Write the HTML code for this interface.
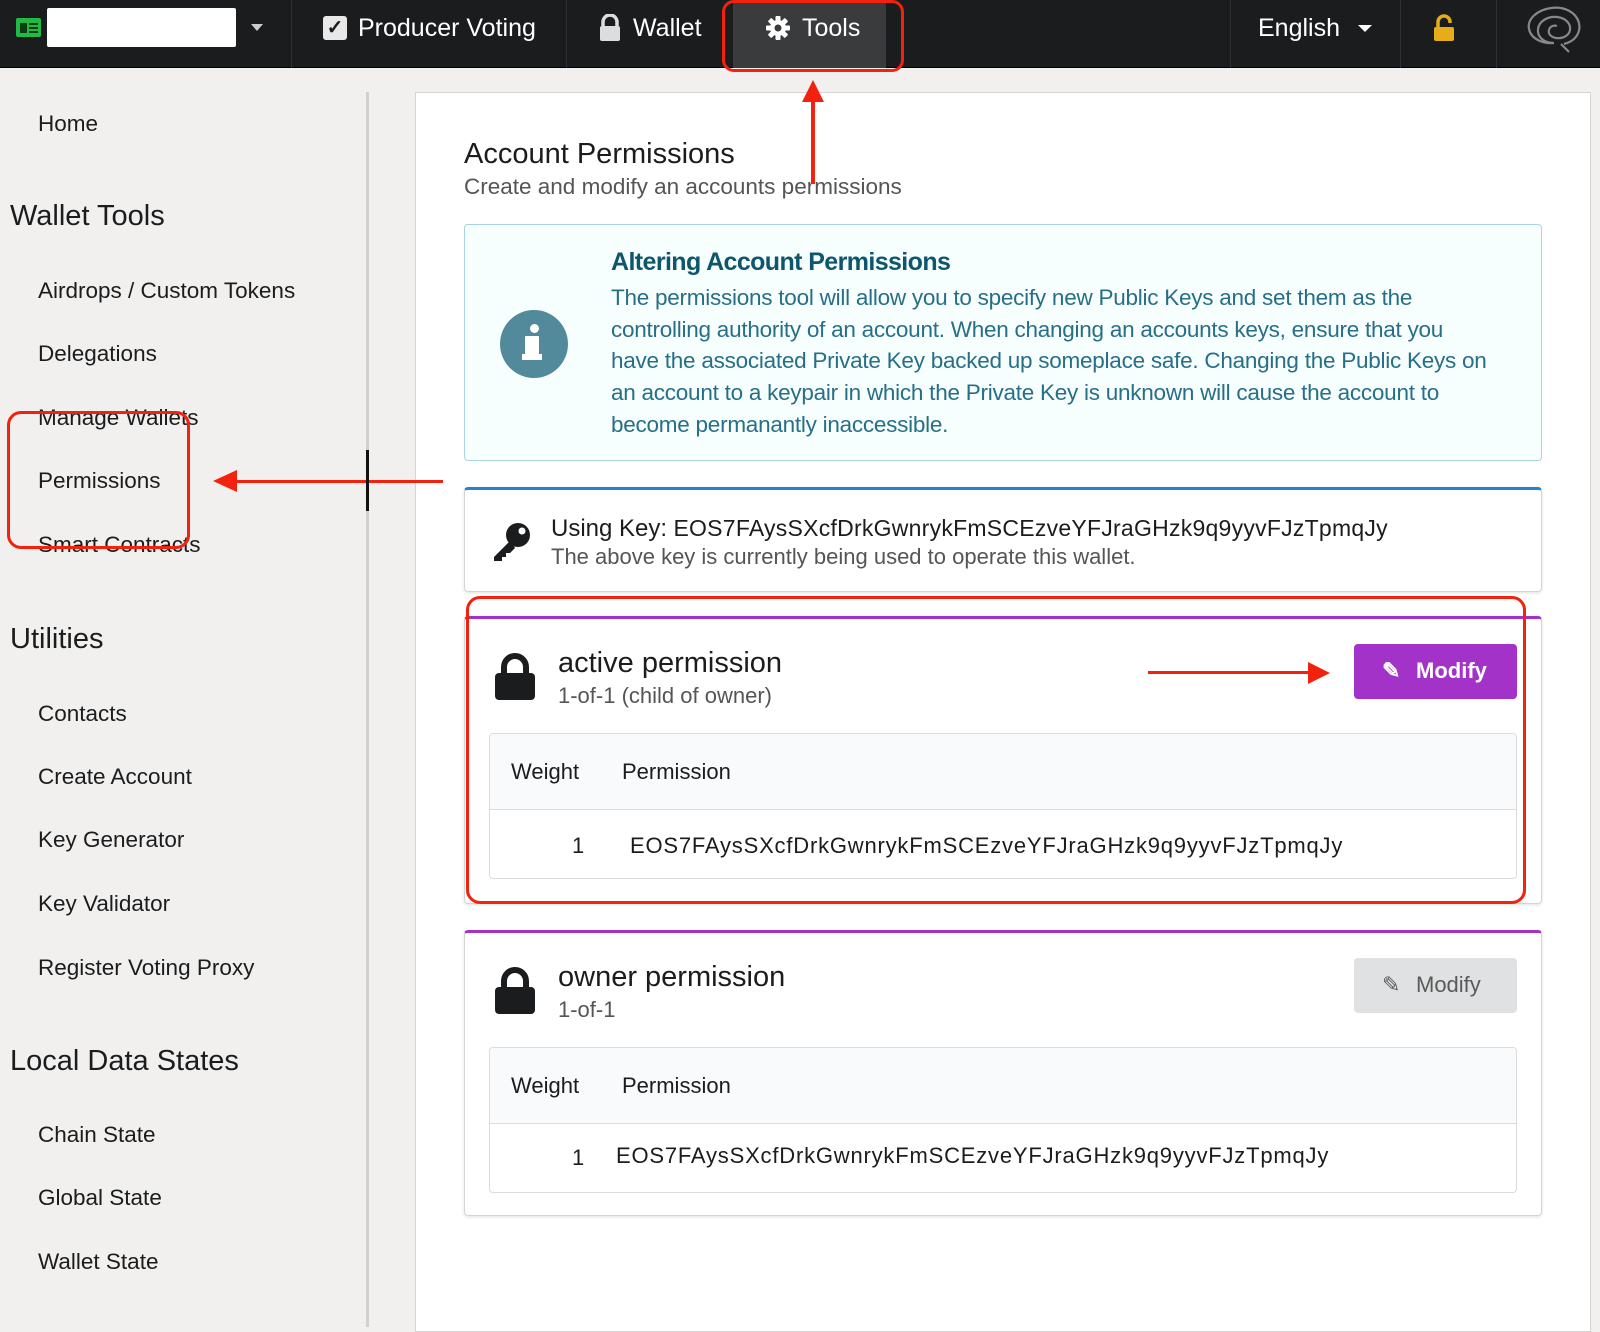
<!DOCTYPE html>
<html><head><meta charset="utf-8"><style>
*{margin:0;padding:0;box-sizing:border-box}
body{width:1600px;height:1327px;overflow:hidden;background:#f1f0ef;font-family:"Liberation Sans",sans-serif;position:relative;color:#1b1c1d}
.a{position:absolute;white-space:nowrap}
.nav{position:absolute;left:0;top:0;width:1600px;height:68px;background:#1b1c1e;border-bottom:1px solid #000}
.nt{color:#fff;font-size:25px;line-height:30px;top:13px}
.vd{position:absolute;top:0;width:1px;height:68px;background:#2f3033}
.si{font-size:22.5px;line-height:26px;left:38px;color:#1b1c1d}
.sh{font-size:29px;line-height:34px;left:10px;color:#1b1c1d}
.card{position:absolute;left:464px;width:1078px;background:#fff;border:1px solid #d4d4d5;border-radius:4px;box-shadow:0 1px 3px rgba(0,0,0,.12)}
.tbl{position:absolute;left:24px;width:1028px;border:1px solid #dcdcdd;border-radius:4px;overflow:hidden;background:#fff}
.th{height:76px;background:#f9fafb;border-bottom:1px solid #dcdcdd;position:relative}
.btn{position:absolute;left:889px;width:163px;height:55px;border-radius:4px;font-size:22px;font-weight:bold}
.k{letter-spacing:0.8px}
</style></head><body>
<div class="nav">
  <div class="a" style="left:16px;top:18px;width:25px;height:19px;background:#21ba45;border-radius:2px"></div>
  <div class="a" style="left:20px;top:23px;width:7px;height:10px;background:#0c3d14"></div>
  <div class="a" style="left:29px;top:23px;width:9px;height:2px;background:#0c3d14;box-shadow:0 4px 0 #0c3d14,0 8px 0 #0c3d14"></div>
  <div class="a" style="left:47px;top:8px;width:189px;height:39px;background:#fff;border-radius:2px"></div>
  <div class="a" style="left:251px;top:24px;border:6px solid transparent;border-top:7px solid #ccc"></div>
  <div class="vd" style="left:291px"></div>
  <div class="a" style="left:323px;top:16px;width:24px;height:24px;background:#e8e8e8;border-radius:3px;color:#1b1c1e;font-size:20px;line-height:24px;text-align:center;font-weight:bold">✓</div>
  <div class="a nt" style="left:358px">Producer Voting</div>
  <div class="vd" style="left:566px"></div>
  <svg class="a" style="left:598px;top:14px" width="24" height="28" viewBox="0 0 24 28"><path d="M5 12V8a7 7 0 0 1 14 0v4" stroke="#ddd" stroke-width="3.5" fill="none"/><rect x="2" y="12" width="20" height="15" rx="2" fill="#ddd"/></svg>
  <div class="a nt" style="left:633px">Wallet</div>
  <div class="a" style="left:733px;top:0;width:153px;height:68px;background:#3a3b3d"></div>
  <svg class="a" style="left:765px;top:15px" width="26" height="26" viewBox="0 0 26 26"><g fill="#fff"><circle cx="13" cy="13" r="8"/><rect x="10.5" y="1" width="5" height="24" rx="1"/><rect x="10.5" y="1" width="5" height="24" rx="1" transform="rotate(45 13 13)"/><rect x="10.5" y="1" width="5" height="24" rx="1" transform="rotate(90 13 13)"/><rect x="10.5" y="1" width="5" height="24" rx="1" transform="rotate(135 13 13)"/></g><circle cx="13" cy="13" r="3.5" fill="#3a3b3d"/></svg>
  <div class="a nt" style="left:802px">Tools</div>
  <div class="vd" style="left:1230px"></div>
  <div class="a nt" style="left:1258px">English</div>
  <div class="a" style="left:1358px;top:25px;border:7px solid transparent;border-top:7px solid #fff"></div>
  <div class="vd" style="left:1400px"></div>
  <svg class="a" style="left:1432px;top:14px" width="24" height="28" viewBox="0 0 24 28"><path d="M6 13V8a6 6 0 0 1 12 0v1" stroke="#e6ac1a" stroke-width="3.5" fill="none"/><rect x="2" y="13" width="20" height="14" rx="2" fill="#e6ac1a"/></svg>
  <div class="vd" style="left:1496px"></div>
  <svg class="a" style="left:1524px;top:4px" width="60" height="50" viewBox="0 0 60 50"><g fill="none" stroke="#888" stroke-width="2.2"><path d="M40 40c12-3 17-12 15-21C52 8 40 2 27 4 13 6 3 15 5 25c2 10 14 15 25 14"/><path d="M30 39c-10 0-17-6-16-14 1-8 10-13 19-12 9 1 14 7 13 13-1 6-8 9-14 8-6-1-8-5-7-8 1-4 5-5 8-4"/><path d="M37 40l8 8"/></g></svg>
</div>
<!-- sidebar -->
<div class="a" style="left:366px;top:92px;width:3px;height:1235px;background:#d0d0d0"></div>
<div class="a si" style="top:111px">Home</div>
<div class="a sh" style="top:199px">Wallet Tools</div>
<div class="a si" style="top:278px">Airdrops / Custom Tokens</div>
<div class="a si" style="top:341px">Delegations</div>
<div class="a si" style="top:405px">Manage Wallets</div>
<div class="a si" style="top:468px">Permissions</div>
<div class="a si" style="top:532px">Smart Contracts</div>
<div class="a sh" style="top:622px">Utilities</div>
<div class="a si" style="top:701px">Contacts</div>
<div class="a si" style="top:764px">Create Account</div>
<div class="a si" style="top:827px">Key Generator</div>
<div class="a si" style="top:891px">Key Validator</div>
<div class="a si" style="top:955px">Register Voting Proxy</div>
<div class="a sh" style="top:1044px">Local Data States</div>
<div class="a si" style="top:1122px">Chain State</div>
<div class="a si" style="top:1185px">Global State</div>
<div class="a si" style="top:1249px">Wallet State</div>
<!-- content panel -->
<div class="a" style="left:415px;top:92px;width:1176px;height:1240px;background:#fff;border:1px solid #d4d4d5"></div>
<div class="a" style="left:464px;top:137px;font-size:29px;line-height:34px">Account Permissions</div>
<div class="a" style="left:464px;top:174px;font-size:22.5px;line-height:26px;color:#555">Create and modify an accounts permissions</div>
<div class="a" style="left:464px;top:224px;width:1078px;height:237px;background:#f7fefe;border:1px solid #a9d5de;border-radius:4px"></div>
<div class="a" style="left:500px;top:310px;width:68px;height:68px;border-radius:50%;background:#528a9c"></div>
<div class="a" style="left:530px;top:324px;width:9px;height:9px;border-radius:50%;background:#fff"></div>
<div class="a" style="left:525px;top:336px;width:14px;height:24px;background:#fff;border-radius:1px"></div>
<div class="a" style="left:522px;top:354px;width:20px;height:6px;background:#fff"></div>
<div class="a" style="left:611px;top:246px;font-size:25px;line-height:32px;color:#0e566c;font-weight:bold;letter-spacing:-.6px">Altering Account Permissions</div>
<div class="a" style="left:611px;top:282px;font-size:22.5px;line-height:31.7px;color:#276f86;letter-spacing:-.25px">The permissions tool will allow you to specify new Public Keys and set them as the<br>controlling authority of an account. When changing an accounts keys, ensure that you<br>have the associated Private Key backed up someplace safe. Changing the Public Keys on<br>an account to a keypair in which the Private Key is unknown will cause the account to<br>become permanantly inaccessible.</div>
<!-- key card -->
<div class="card" style="top:487px;height:105px;border-top:3px solid #2185d0">
  <svg class="a" style="left:26px;top:30px" width="42" height="42" viewBox="0 0 42 42"><circle cx="27" cy="15" r="12" fill="#1b1c1d"/><circle cx="31" cy="11" r="3.5" fill="#fff"/><path d="M20 20L3 37v4h8v-4h4v-4h4l5-5z" fill="#1b1c1d"/></svg>
  <div class="a" style="left:86px;top:24px;font-size:23px;line-height:28px"><span style="font-size:24px">Using Key:</span> <span style="letter-spacing:.25px">EOS7FAysSXcfDrkGwnrykFmSCEzveYFJraGHzk9q9yyvFJzTpmqJy</span></div>
  <div class="a" style="left:86px;top:54px;font-size:22px;line-height:26px;color:#555">The above key is currently being used to operate this wallet.</div>
</div>
<!-- active -->
<div class="card" style="top:616px;height:288px;border-top:3px solid #a333c8">
  <svg class="a" style="left:30px;top:34px" width="40" height="48" viewBox="0 0 40 48"><path d="M9 22V14a11 11 0 0 1 22 0v8" stroke="#1b1c1d" stroke-width="6" fill="none"/><rect x="0" y="20" width="40" height="27" rx="4" fill="#1b1c1d"/></svg>
  <div class="a" style="left:93px;top:27px;font-size:29px;line-height:34px">active permission</div>
  <div class="a" style="left:93px;top:64px;font-size:22px;line-height:26px;color:#555">1-of-1 (child of owner)</div>
  <div class="btn a" style="top:25px;background:#a333c8;color:#fff"><span class="a" style="left:28px;top:14px;font-size:22px">✎</span><span class="a" style="left:62px;top:13px;line-height:28px">Modify</span></div>
  <div class="tbl" style="top:114px;height:146px">
    <div class="th"><span class="a" style="left:21px;top:25px;font-size:22px;line-height:26px">Weight</span><span class="a" style="left:132px;top:25px;font-size:22px;line-height:26px">Permission</span></div>
    <span class="a" style="left:82px;top:99px;font-size:22px;line-height:26px">1</span>
    <span class="a k" style="left:140px;top:99px;font-size:22px;line-height:26px">EOS7FAysSXcfDrkGwnrykFmSCEzveYFJraGHzk9q9yyvFJzTpmqJy</span>
  </div>
</div>
<!-- owner -->
<div class="card" style="top:930px;height:286px;border-top:3px solid #a333c8">
  <svg class="a" style="left:30px;top:34px" width="40" height="48" viewBox="0 0 40 48"><path d="M9 22V14a11 11 0 0 1 22 0v8" stroke="#1b1c1d" stroke-width="6" fill="none"/><rect x="0" y="20" width="40" height="27" rx="4" fill="#1b1c1d"/></svg>
  <div class="a" style="left:93px;top:27px;font-size:29px;line-height:34px">owner permission</div>
  <div class="a" style="left:93px;top:64px;font-size:22px;line-height:26px;color:#555">1-of-1</div>
  <div class="btn a" style="top:25px;background:#e0e1e2;color:#5a5a5a;font-weight:normal"><span class="a" style="left:28px;top:14px;font-size:22px">✎</span><span class="a" style="left:62px;top:13px;line-height:28px">Modify</span></div>
  <div class="tbl" style="top:114px;height:146px">
    <div class="th"><span class="a" style="left:21px;top:25px;font-size:22px;line-height:26px">Weight</span><span class="a" style="left:132px;top:25px;font-size:22px;line-height:26px">Permission</span></div>
    <span class="a" style="left:82px;top:97px;font-size:22px;line-height:26px">1</span>
    <span class="a k" style="left:126px;top:95px;font-size:22px;line-height:26px">EOS7FAysSXcfDrkGwnrykFmSCEzveYFJraGHzk9q9yyvFJzTpmqJy</span>
  </div>
</div>
<!-- annotations -->
<div class="a" style="left:722px;top:0;width:182px;height:72px;border:3px solid #f2220e;border-radius:12px"></div>
<div class="a" style="left:811px;top:100px;width:4px;height:84px;background:#f2220e"></div>
<div class="a" style="left:802px;top:80px;border:11px solid transparent;border-bottom:22px solid #f2220e;border-top:0"></div>
<div class="a" style="left:7px;top:411px;width:183px;height:138px;border:3px solid #f2220e;border-radius:14px"></div>
<div class="a" style="left:236px;top:480px;width:207px;height:3px;background:#f2220e"></div>
<div class="a" style="left:213px;top:470px;border:11px solid transparent;border-right:24px solid #f2220e;border-left:0"></div>
<div class="a" style="left:366px;top:450px;width:3px;height:61px;background:#111"></div>
<div class="a" style="left:466px;top:596px;width:1060px;height:308px;border:3px solid #f2220e;border-radius:14px"></div>
<div class="a" style="left:1148px;top:671px;width:162px;height:3px;background:#f2220e"></div>
<div class="a" style="left:1308px;top:662px;border:11px solid transparent;border-left:22px solid #f2220e;border-right:0"></div>
</body></html>
